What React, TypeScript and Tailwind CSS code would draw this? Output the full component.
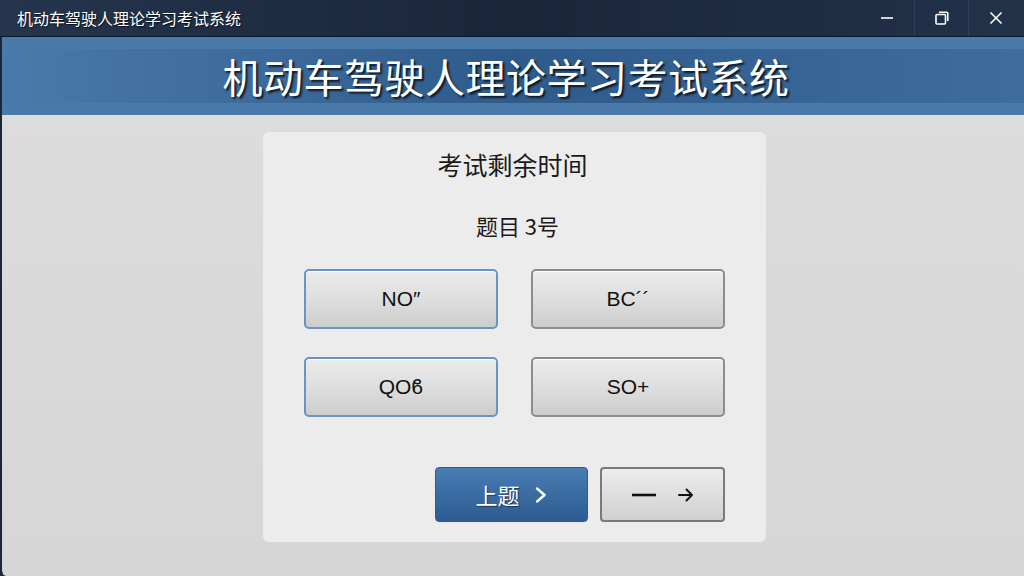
import React from "react";

const cjk = { fontFamily: '"Noto Sans CJK SC", "Noto Sans", sans-serif' };
const latin = { fontFamily: '"Liberation Sans", "Noto Sans CJK SC", sans-serif' };

function OptionButton({ label, blue }: { label: string; blue?: boolean }) {
  return (
    <button
      className={
        "h-[60px] w-[194px] rounded-[5px] border-2 bg-gradient-to-b from-[#ebebeb] via-[#dedede] to-[#cdcdcd] text-[21px] text-[#111] shadow-[inset_0_1px_0_rgba(255,255,255,0.8)] flex items-center justify-center " +
        (blue ? "border-[#6a94c3]" : "border-[#8c8c8c]")
      }
      style={latin}
    >
      {label}
    </button>
  );
}

export default function App() {
  return (
    <div className="w-[1024px] h-[576px] flex flex-col overflow-hidden bg-[#1b2638]" style={cjk}>
      {/* Title bar */}
      <div className="h-[37px] flex items-center bg-gradient-to-r from-[#24354d] via-[#1a263a] to-[#223249] border-b border-[#0f1826]">
        <div className="pl-[17px] text-[16px] text-white [text-shadow:1px_1px_1px_rgba(0,0,0,0.7)]">
          机动车驾驶人理论学习考试系统
        </div>
        <div className="ml-auto flex h-full mr-[2px]">
          <div className="w-[54px] h-full flex items-center justify-center">
            <svg width="14" height="14" viewBox="0 0 14 14">
              <line x1="1" y1="7" x2="13" y2="7" stroke="white" strokeWidth="1.6" />
            </svg>
          </div>
          <div className="w-[54px] h-full flex items-center justify-center border-l border-[#2e3f57]">
            <svg width="16" height="16" viewBox="0 0 16 16" fill="none" stroke="white" strokeWidth="1.6">
              <rect x="2" y="4.5" width="9.5" height="9.5" rx="1" />
              <path d="M5 2.2h7.5a1.3 1.3 0 0 1 1.3 1.3V11" />
            </svg>
          </div>
          <div className="w-[54px] h-full flex items-center justify-center border-l border-[#2e3f57]">
            <svg width="16" height="16" viewBox="0 0 16 16" stroke="white" strokeWidth="1.6">
              <line x1="2.5" y1="2.5" x2="13.5" y2="13.5" />
              <line x1="13.5" y1="2.5" x2="2.5" y2="13.5" />
            </svg>
          </div>
        </div>
      </div>

      {/* Banner */}
      <div className="h-[78px] bg-[#4a7aaa] flex flex-col justify-center border-l-2 border-[#1b2638]">
        <div className="h-[54px] bg-gradient-to-r from-[#4a7aaa] via-[#2f5b8b] to-[#3d6c9d] flex items-center justify-center">
          <div className="text-[40px] leading-none text-white tracking-[0.5px] [text-shadow:2px_2px_2px_rgba(0,0,0,0.75)] pr-[14px]">
            机动车驾驶人理论学习考试系统
          </div>
        </div>
      </div>

      {/* Main */}
      <div className="flex-1 bg-gradient-to-b from-[#dcdcdc] to-[#d6d6d6] border-l-2 border-[#1b2638] rounded-bl-[6px] flex justify-center pt-[17px] pl-[3px]">
        <div className="w-[503px] h-[410px] rounded-[6px] bg-[#ececec] flex flex-col items-center pt-[16px] px-[41px] pb-[20px]">
          <div className="text-[25px] leading-[32px] text-[#1a1a1a] pr-[4px]">考试剩余时间</div>
          <div className="mt-[29px] text-[22px] leading-[32px] text-[#1a1a1a] pl-[6px]">题目 3号</div>
          <div className="mt-[28px] grid grid-cols-2 gap-x-[33px] gap-y-[28px] w-full">
            <OptionButton label="NO″" blue />
            <OptionButton label="BC´´" />
            <OptionButton label="QOϐ" blue />
            <OptionButton label="SO+" />
          </div>
          <div className="mt-[50px] w-full flex justify-end gap-[12px]">
            <button
              className="h-[55px] w-[153px] rounded-[4px] border border-[#2c5b8f] bg-gradient-to-b from-[#4a7db3] via-[#3a6ca2] to-[#2c5b91] text-white text-[22px] flex items-center justify-center gap-[14px] [text-shadow:1px_1px_1px_rgba(0,0,0,0.5)]"
              style={cjk}
            >
              <span>上题</span>
              <svg width="14" height="18" viewBox="0 0 14 18" fill="none" stroke="white" strokeWidth="2.4" strokeLinecap="round" strokeLinejoin="round">
                <path d="M3 2.5l7.5 6.5L3 15.5" />
              </svg>
            </button>
            <button
              className="h-[55px] w-[125px] rounded-[4px] border-2 border-[#7a7a7a] bg-gradient-to-b from-[#ececec] via-[#dfdfdf] to-[#cfcfcf] flex items-center justify-center gap-[20px]"
              style={cjk}
            >
              <svg width="26" height="6" viewBox="0 0 26 6">
                <line x1="1" y1="3" x2="25" y2="3" stroke="#111" strokeWidth="2.6" />
              </svg>
              <svg width="18" height="18" viewBox="0 0 18 18" fill="none" stroke="#111" strokeWidth="2" strokeLinecap="round" strokeLinejoin="round">
                <path d="M2 9h13M9.5 3.5L15 9l-5.5 5.5" />
              </svg>
            </button>
          </div>
        </div>
      </div>
    </div>
  );
}
